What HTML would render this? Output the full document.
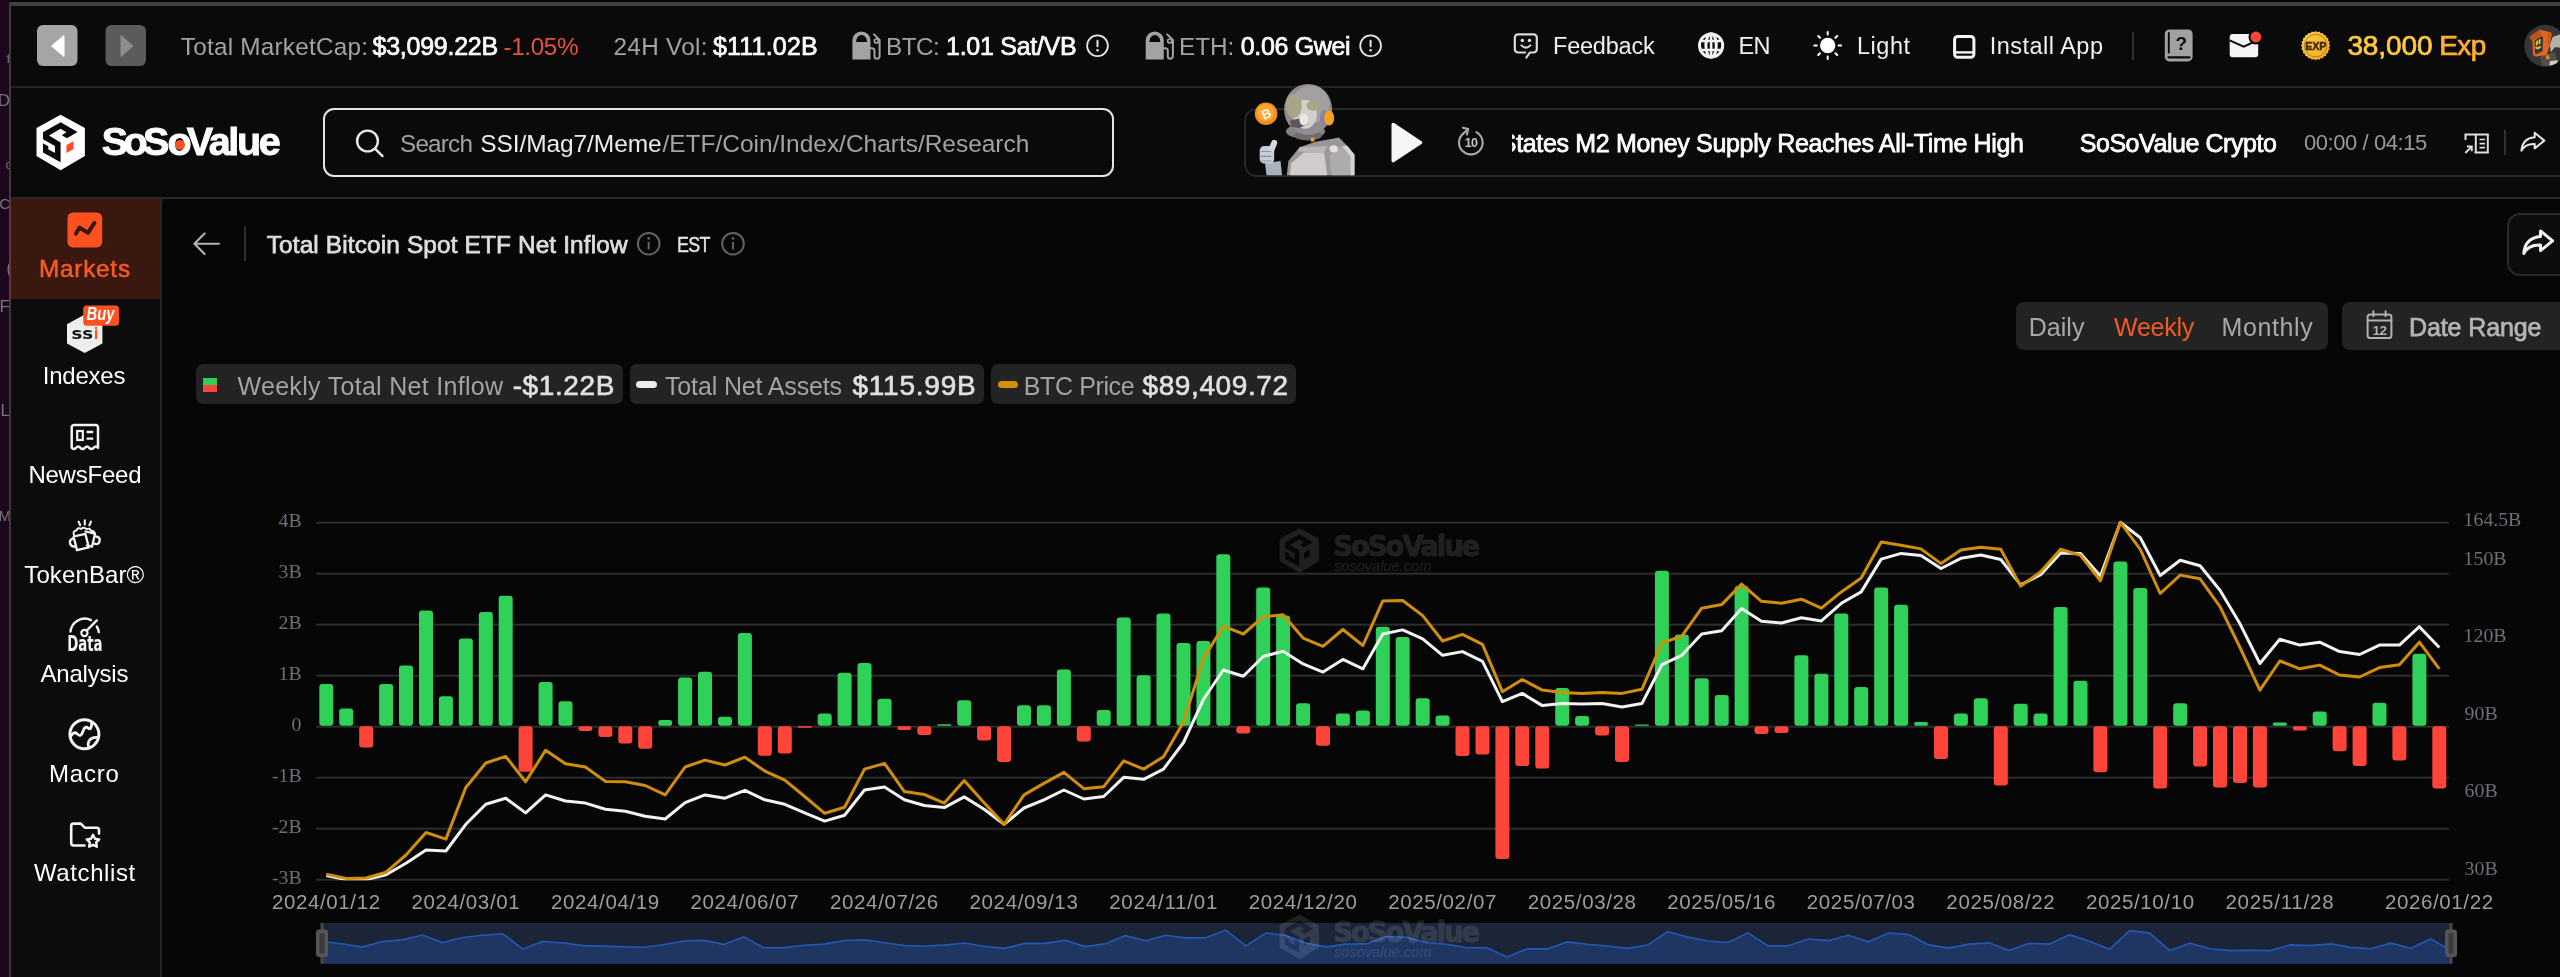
<!DOCTYPE html>
<html lang="en"><head><meta charset="utf-8"><title>Total Bitcoin Spot ETF Net Inflow - SoSoValue</title>
<style>
html,body{margin:0;padding:0;}
body{width:2560px;height:977px;overflow:hidden;background:#0a0a0a;position:relative;font-family:"Liberation Sans",sans-serif;}
.a{position:absolute;}
.t{position:absolute;white-space:pre;line-height:1;}
svg{position:absolute;overflow:visible;}
</style></head><body>
<!-- backgrounds -->
<div class="a" style="left:0;top:0;width:2560px;height:2px;background:#050505"></div>
<div class="a" style="left:10px;top:2px;width:2550px;height:4px;background:#3f4140"></div>
<div class="a" style="left:0;top:0;width:9px;height:977px;background:#1c071f"></div>
<div class="a" style="left:9px;top:2px;width:2px;height:975px;background:#3a3a3a"></div>
<!-- top bar border -->
<div class="a" style="left:11px;top:86px;width:2549px;height:2px;background:#242424"></div>
<!-- header bottom border -->
<div class="a" style="left:11px;top:197.4px;width:2549px;height:2px;background:#272727"></div>
<!-- sidebar -->
<div class="a" style="left:11px;top:199px;width:150px;height:778px;background:#0c0c0c"></div>
<div class="a" style="left:11px;top:199px;width:150px;height:100px;background:#3a1810"></div>
<div class="a" style="left:9px;top:199px;width:2px;height:100px;background:#5c3a33"></div>
<div class="a" style="left:160px;top:199px;width:2px;height:778px;background:#262626"></div>
<!-- content -->
<div class="a" style="left:162px;top:199px;width:2398px;height:778px;background:#060606;border-top-left-radius:10px"></div>
<!-- search box -->
<div class="a" style="left:323px;top:107.5px;width:787px;height:65px;border:2px solid #e4e4e4;border-radius:11px"></div>
<!-- player panel -->
<div class="a" style="left:1244px;top:108.1px;width:1340px;height:65.1px;border:2px solid #272727;border-radius:13px"></div>
<!-- share box -->
<div class="a" style="left:2507px;top:213px;width:80px;height:59px;border:2px solid #2a2a2a;border-radius:13px;background:#0d0d0d"></div>
<!-- period group -->
<div class="a" style="left:2016px;top:302px;width:312px;height:48px;border-radius:8px;background:#232323"></div>
<div class="a" style="left:2341.5px;top:302px;width:240px;height:48px;border-radius:8px;background:#232323"></div>
<!-- legend chips -->
<div class="a" style="left:196.2px;top:363.7px;width:427.3px;height:40.8px;border-radius:7px;background:#232323"></div>
<div class="a" style="left:629.5px;top:363.7px;width:354.7px;height:40.8px;border-radius:7px;background:#232323"></div>
<div class="a" style="left:990.5px;top:363.7px;width:305px;height:40.8px;border-radius:7px;background:#232323"></div>
<div class="a" style="left:203px;top:377.5px;width:14px;height:7.2px;background:#2fd15a"></div>
<div class="a" style="left:203px;top:384.7px;width:14px;height:7px;background:#ff453a"></div>
<div class="a" style="left:636.2px;top:380.7px;width:20.5px;height:7.5px;border-radius:4px;background:#ebebeb"></div>
<div class="a" style="left:997.5px;top:380.7px;width:20.5px;height:7.5px;border-radius:4px;background:#d18e0b"></div>
<!-- title separators -->
<div class="a" style="left:244px;top:226px;width:2px;height:35px;background:#2e2e2e"></div>
<div class="a" style="left:2132px;top:32px;width:2px;height:28px;background:#303030"></div>
<div class="a" style="left:2504px;top:130px;width:2px;height:25px;background:#303030"></div>
<!-- left strip fragments -->
<div class="a" style="left:0;top:0;width:9px;height:977px;overflow:hidden;color:#767676;font:400 17px/1 'Liberation Sans',sans-serif;will-change:transform">
<span class="a" style="right:-1px;top:92px">D</span>
<span class="a" style="right:-1px;top:195.5px;font-size:15px">AC</span>
<span class="a" style="right:-1px;top:298px">F</span>
<span class="a" style="right:-1px;top:402px">L</span>
<span class="a" style="right:-2px;top:508px;font-size:15px">M</span>
<span class="a" style="right:-1px;top:52px;font-size:13px">f</span>
<span class="a" style="right:-3px;top:158px;font-size:13px">c</span>
<span class="a" style="right:-4px;top:258px;font-size:20px">(</span>
</div>
<svg width="2560" height="977" viewBox="0 0 2560 977" style="left:0;top:0;will-change:transform">
<rect x="37" y="25" width="40.5" height="41" rx="6" fill="#a5a5a5"/>
<path d="M51.5 46 L64 35.5 V56.5 Z" fill="#fff" stroke="#fff" stroke-width="1" stroke-linejoin="round"/>
<rect x="105.5" y="25" width="40.5" height="41" rx="6" fill="#5b5b5b"/>
<path d="M133 46 L121 35.5 V56.5 Z" fill="#8d8d8d" stroke="#8d8d8d" stroke-width="1" stroke-linejoin="round"/>
<polygon points="60.61,114.66 84.89,127.96 84.89,155.91 60.61,170.21 36.52,155.91 36.52,127.96" fill="#ffffff"/>
<polygon points="60.61,122.31 77.57,131.96 66.93,138.28 61.80,135.28 66.46,132.29 60.61,128.76 48.96,135.62 60.61,142.40 60.61,162.23 42.97,152.58 42.97,143.27 48.30,146.26 48.30,149.25 54.95,152.91 54.95,145.93 42.97,139.27 42.97,132.29" fill="#0a0a0a"/>
<polygon points="66.46,144.93 73.58,141.27 73.58,148.92 66.46,153.11" fill="#ff4f1f"/>
<g transform="translate(0,0)" fill="#a3a3a3"><path d="M852.4 59.5V40.6a9.05 9.2 0 0 1 18.1 0V59.5Z"/><path d="M856 41.9a5.55 7 0 0 1 11.1 0Z" fill="#0a0a0a"/><path d="M870.3 48.2h1.6q2.6 0 2.6 2.6v5.4a2.55 2.55 0 0 0 5.1 0V40l-5.6-5.6" fill="none" stroke="#a3a3a3" stroke-width="2" stroke-linecap="round" stroke-linejoin="round"/><circle cx="876.4" cy="41" r="2" fill="none" stroke="#a3a3a3" stroke-width="1.7"/></g>
<g transform="translate(293.3,0)" fill="#a3a3a3"><path d="M852.4 59.5V40.6a9.05 9.2 0 0 1 18.1 0V59.5Z"/><path d="M856 41.9a5.55 7 0 0 1 11.1 0Z" fill="#0a0a0a"/><path d="M870.3 48.2h1.6q2.6 0 2.6 2.6v5.4a2.55 2.55 0 0 0 5.1 0V40l-5.6-5.6" fill="none" stroke="#a3a3a3" stroke-width="2" stroke-linecap="round" stroke-linejoin="round"/><circle cx="876.4" cy="41" r="2" fill="none" stroke="#a3a3a3" stroke-width="1.7"/></g>
<circle cx="1097.5" cy="45.7" r="10.4" fill="none" stroke="#e6e6e6" stroke-width="1.8"/><rect x="1096.5" y="39.7" width="2" height="7.5" rx="1" fill="#e6e6e6"/><circle cx="1097.5" cy="50.300000000000004" r="1.25" fill="#e6e6e6"/>
<circle cx="1370.6" cy="45.7" r="10.4" fill="none" stroke="#e6e6e6" stroke-width="1.8"/><rect x="1369.6" y="39.7" width="2" height="7.5" rx="1" fill="#e6e6e6"/><circle cx="1370.6" cy="50.300000000000004" r="1.25" fill="#e6e6e6"/>
<path d="M1525.2 52.5H1518a3.2 3.2 0 0 1-3.2-3.2V37.6a3.2 3.2 0 0 1 3.2-3.2h15.6a3.2 3.2 0 0 1 3.2 3.2v11.7a3.2 3.2 0 0 1-3.2 3.2h-3.8l-3.4 5" fill="none" stroke="#dadada" stroke-width="2.2" stroke-linecap="round" stroke-linejoin="round"/>
<circle cx="1522.3" cy="40.4" r="1.7" fill="#e6e6e6"/><circle cx="1529.5" cy="40.4" r="1.7" fill="#e6e6e6"/>
<path d="M1521.4 45.4q4.5 4.4 9 0" fill="none" stroke="#dadada" stroke-width="2" stroke-linecap="round"/>
<g fill="none" stroke="#f2f2f2" stroke-width="3"><circle cx="1711.1" cy="45.5" r="11.6"/><ellipse cx="1711.1" cy="45.5" rx="5.2" ry="11.8"/><path d="M1711.1 33.7v23.6M1700 41h22.2M1700 50h22.2" stroke-width="2.6"/></g>
<circle cx="1827.7" cy="45.5" r="7.7" fill="#fff"/>
<path d="M1838.60 45.50L1841.10 45.50M1835.41 53.21L1837.18 54.98M1827.70 56.40L1827.70 58.90M1819.99 53.21L1818.22 54.98M1816.80 45.50L1814.30 45.50M1819.99 37.79L1818.22 36.02M1827.70 34.60L1827.70 32.10M1835.41 37.79L1837.18 36.02" stroke="#fff" stroke-width="2" stroke-linecap="round" fill="none"/>
<rect x="1954.6" y="36.5" width="19.3" height="20.7" rx="3" fill="none" stroke="#f4f4f4" stroke-width="3"/>
<path d="M1955 52.4h18.5" stroke="#f4f4f4" stroke-width="2.4"/>
<rect x="2164.8" y="29.4" width="27.8" height="32" rx="4.5" fill="#a1a1a1"/>
<path d="M2168.8 33v19.5" stroke="#0a0a0a" stroke-width="1.9" stroke-linecap="round"/><path d="M2168.5 57.3h21" stroke="#0a0a0a" stroke-width="2.3" stroke-linecap="round"/>
<text x="2181.3" y="50" text-anchor="middle" font-family="Liberation Sans, sans-serif" font-weight="700" font-size="19" fill="#0a0a0a">?</text>
<rect x="2229.7" y="33.9" width="28.5" height="23.4" rx="3" fill="#f5f5f5"/>
<path d="M2229.7 40.3l14 6.3l14.5-6.6" fill="none" stroke="#0a0a0a" stroke-width="2"/>
<circle cx="2255.9" cy="37" r="7.4" fill="#0a0a0a"/><circle cx="2255.9" cy="37" r="5.4" fill="#ff453a"/>
<defs><linearGradient id="gold" x1="0" y1="0" x2="1" y2="1"><stop offset="0" stop-color="#ffd24a"/><stop offset="1" stop-color="#f0a51e"/></linearGradient></defs>
<polygon points="2330.20,45.60 2328.98,47.36 2329.70,49.38 2328.07,50.77 2328.24,52.90 2326.31,53.82 2325.92,55.92 2323.82,56.31 2322.90,58.24 2320.77,58.07 2319.38,59.70 2317.36,58.98 2315.60,60.20 2313.84,58.98 2311.82,59.70 2310.43,58.07 2308.30,58.24 2307.38,56.31 2305.28,55.92 2304.89,53.82 2302.96,52.90 2303.13,50.77 2301.50,49.38 2302.22,47.36 2301.00,45.60 2302.22,43.84 2301.50,41.82 2303.13,40.43 2302.96,38.30 2304.89,37.38 2305.28,35.28 2307.38,34.89 2308.30,32.96 2310.43,33.13 2311.82,31.50 2313.84,32.22 2315.60,31.00 2317.36,32.22 2319.38,31.50 2320.77,33.13 2322.90,32.96 2323.82,34.89 2325.92,35.28 2326.31,37.38 2328.24,38.30 2328.07,40.43 2329.70,41.82 2328.98,43.84" fill="url(#gold)"/>
<circle cx="2315.6" cy="45.6" r="11.3" fill="none" stroke="#8a5e06" stroke-width="0.8" opacity="0.8"/>
<text x="2315.7" y="49.8" text-anchor="middle" font-family="Liberation Sans, sans-serif" font-weight="700" font-size="10.6" fill="#3c2800" stroke="#3c2800" stroke-width="0.4" letter-spacing="-0.1">EXP</text>
<defs><clipPath id="avc"><circle cx="2545.2" cy="45.7" r="20.9"/></clipPath></defs>
<circle cx="2545.2" cy="45.7" r="20.9" fill="#363636"/>
<g clip-path="url(#avc)">
<polygon points="2541.3,54.9 2555.2,52.3 2557.2,61.6 2550.6,66.6 2543.2,66.6 2539.9,58.2" fill="#5a4a44"/>
<polygon points="2549.9,60.9 2557.9,60.2 2557.2,64.2 2549.2,65.6" fill="#cfcbc4"/>
<polygon points="2545.9,55.6 2549.2,55.3 2549.6,58.9 2546.2,59.2" fill="#c8901e"/>
<polygon points="2552.6,37.0 2563.9,33.0 2563.9,48.3 2555.2,46.9 2550.6,52.3 2549.9,44.9" fill="#b6b1a9"/>
<polygon points="2529.3,37.0 2539.9,29.6 2550.6,32.3 2551.6,34.3 2549.9,44.9 2546.6,54.9 2535.9,56.6 2532.9,54.9 2532.6,41.6" fill="#e2641f"/>
<polygon points="2529.3,37.0 2539.9,29.6 2541.3,35.0 2533.3,40.9 2532.9,54.9 2532.6,41.6" fill="#bd521b"/>
<polygon points="2547.6,32.6 2550.6,32.3 2551.6,34.3 2549.9,44.9 2546.9,42.9" fill="#c95a1c"/>
<polygon points="2534.9,40.3 2541.6,36.3 2542.9,37.3 2542.6,50.9 2536.3,54.3 2534.9,52.9" fill="#2e3446"/>
<path d="M2537.3 41.3L2536.7 44.6M2539.8 40.0L2539.4 43.3" stroke="#d6c61e" stroke-width="1.9" stroke-linecap="round" fill="none"/>
<path d="M2536.3 47.6Q2537.9 49.3 2539.9 46.9" stroke="#d6c61e" stroke-width="2.2" stroke-linecap="round" fill="none"/>
</g>
<circle cx="367.5" cy="141" r="10.4" fill="none" stroke="#e8e8e8" stroke-width="2.4"/><path d="M375.2 148.8l7.3 7.3" stroke="#e8e8e8" stroke-width="2.4" stroke-linecap="round"/>
<defs><clipPath id="plc"><rect x="1240" y="70" width="140" height="105.6"/></clipPath></defs><g clip-path="url(#plc)">
<polygon points="1286.8,175.4 1288.4,161.0 1299.6,147.2 1314.5,141.9 1339.0,137.6 1347.5,146.1 1354.5,154.7 1354.5,175.4" fill="#9a969a" />
<polygon points="1290.0,175.4 1291.1,163.2 1303.9,152.5 1324.1,152.5 1327.3,175.4" fill="#cfcccb" />
<polygon points="1299.6,147.2 1327.3,146.1 1324.1,152.5 1297.5,151.5" fill="#b9b5b8" />
<polygon points="1329.4,154.7 1342.2,146.1 1352.9,156.8 1352.9,175.4 1331.6,175.4" fill="#aeabac" />
<polygon points="1342.2,146.1 1347.5,146.1 1354.5,154.7 1354.5,175.4 1350.7,175.4 1350.7,156.8" fill="#d6d4d2" />
<ellipse cx="1333.7" cy="148.8" rx="4.2" ry="3.6" fill="#e4e0dc"/>
<ellipse cx="1305.5" cy="131.2" rx="19.5" ry="7.5" fill="#858185"/>
<ellipse cx="1308.1" cy="135.5" rx="14" ry="5" fill="#6f6b70"/>
<rect x="1310.8" y="137.6" width="3.6" height="4" fill="#f0a020"/>
<ellipse cx="1308.1" cy="109.4" rx="24" ry="25.5" fill="#8f8b90"/>
<ellipse cx="1310.3" cy="104.6" rx="19" ry="19" fill="#a39fa2"/>
<ellipse cx="1304.9" cy="114.2" rx="12" ry="14.5" fill="#d3cecb"/>
<ellipse cx="1293.8" cy="105.7" rx="8" ry="12" fill="#a6a686"/>
<ellipse cx="1313.5" cy="105.7" rx="7" ry="5" fill="#a6a686"/>
<polygon points="1290.0,120.6 1299.6,118.5 1308.1,123.8 1299.6,128.0 1291.1,127.0" fill="#5a5658" />
<ellipse cx="1303.9" cy="119.5" rx="4.5" ry="6" fill="#ebe6e2"/>
<ellipse cx="1325.2" cy="118.2" rx="5.2" ry="8" fill="#8a80a0"/>
<ellipse cx="1329.2" cy="118.0" rx="5" ry="7.4" fill="#f7a21e"/>
<polygon points="1265.0,163.2 1280.5,161.0 1282.1,175.4 1266.6,175.4" fill="#aab3bd" />
<rect x="1259.7" y="146.1" width="14.5" height="17.5" rx="4.5" fill="#c6ced6"/>
<rect x="1269.8" y="139.2" width="6" height="13" rx="3" fill="#d2d9e0" transform="rotate(22 1271.9 146.1)"/>
<path d="M1260.8 151.5h10.5M1260.4 156.3h11M1261.0 161.0h10.5" stroke="#8b949e" stroke-width="1.2" fill="none"/>
<circle cx="1266.1" cy="113.7" r="11.3" fill="#f3901a"/>
<circle cx="1265.6" cy="112.6" r="8.6" fill="#f9a63a"/>
<text x="1266.4" y="118.5" text-anchor="middle" font-family="Liberation Sans, sans-serif" font-weight="700" font-size="13" fill="#fff6e0" transform="rotate(-22 1266.1 113.7)">B</text>
</g>
<path d="M1393.2 124.5V160.7L1420.6 142.6Z" fill="#f6f6f6" stroke="#f6f6f6" stroke-width="3.4" stroke-linejoin="round"/>
<path d="M1476.34 132.18A11.8 11.8 0 1 1 1463.54 133.30" fill="none" stroke="#a9a9a9" stroke-width="2.1" stroke-linecap="round"/>
<path d="M1462.94 127.70L1468.14 129.10L1466.94 134.50" fill="none" stroke="#a9a9a9" stroke-width="2.1" stroke-linecap="round" stroke-linejoin="round"/>
<path d="M1463.54 133.30L1468.14 129.10" fill="none" stroke="#a9a9a9" stroke-width="2.1" stroke-linecap="round"/>
<text x="1471.1" y="147.29999999999998" text-anchor="middle" font-family="Liberation Sans, sans-serif" font-weight="700" font-size="12.5" letter-spacing="-0.6" fill="#c4c4c4">10</text>
<g fill="none" stroke="#e0e0e0" stroke-width="2"><path d="M2465.5 140V134.5H2487.8V152.6H2474.5"/><path d="M2475.8 134.5V152.6"/><path d="M2479.5 139.5h5.5M2479.5 143.6h5.5M2479.5 147.7h5.5" stroke-width="1.7"/><path d="M2465.3 153l6.2-6.2M2467 146.5h4.8v4.8" stroke-width="1.9"/></g>
<path transform="translate(2520.5,132) scale(1.0)" d="M14.2 0.8L23.8 8.6L14.2 16.4V11.9C7.6 11.6 3.4 14 0.9 18.6C1.6 11.4 5.6 5.9 14.2 5.2Z" fill="none" stroke="#e6e6e6" stroke-width="2.00" stroke-linejoin="round"/>
<path transform="translate(2522.6,230) scale(1.26)" d="M14.2 0.8L23.8 8.6L14.2 16.4V11.9C7.6 11.6 3.4 14 0.9 18.6C1.6 11.4 5.6 5.9 14.2 5.2Z" fill="none" stroke="#f4f4f4" stroke-width="2.38" stroke-linejoin="round"/>
<rect x="67.5" y="212.4" width="34.7" height="35" rx="5.5" fill="#ff5120"/>
<path d="M75.9 233.8L79.6 227.6L88 232.8L94.4 222.9" fill="none" stroke="#3a1810" stroke-width="4" stroke-linecap="round" stroke-linejoin="round"/>
<polygon points="84.7,314.6 102.4,324.2 102.4,343.4 84.7,353 67,343.4 67,324.2" fill="#ededed"/>
<text x="71.4" y="339" font-family="DejaVu Sans, Liberation Sans, sans-serif" font-weight="700" font-size="15.5" fill="#141414" textLength="21.6" lengthAdjust="spacingAndGlyphs">ss</text>
<text x="94" y="339" font-family="DejaVu Sans, Liberation Sans, sans-serif" font-weight="700" font-size="15.5" fill="#ff5120" textLength="4.2" lengthAdjust="spacingAndGlyphs">i</text>
<rect x="83.2" y="305.5" width="35.8" height="20.3" rx="3.5" fill="#ff5120"/>
<text x="86.6" y="320.4" font-family="Liberation Sans, sans-serif" font-weight="700" font-style="italic" font-size="18" fill="#fff" textLength="28" lengthAdjust="spacingAndGlyphs">Buy</text>
<path d="M71.7 447.8V427.2a2.3 2.3 0 0 1 2.3-2.3h21.7a2.3 2.3 0 0 1 2.3 2.3V447.8q-2.2-2.4-4.4 0t-4.4 0t-4.4 0t-4.4 0t-4.4 0t-4.3 0Z" fill="none" stroke="#f4f4f4" stroke-width="2.5" stroke-linejoin="round"/>
<rect x="77.2" y="431" width="5.6" height="9" fill="none" stroke="#f4f4f4" stroke-width="2.2"/><path d="M86.6 432h6.6M86.6 438.6h6.6" stroke="#f4f4f4" stroke-width="2.3"/>
<g fill="none" stroke="#f4f4f4" stroke-width="2.3" stroke-linejoin="round" stroke-linecap="round"><path d="M73.6 536.5l11.8-2.6l3.4 13.4l-11.8 2.8Z"/><path d="M73.8 538.5q-4.6 0.6-3.8 4.6t5.4 3.4"/><path d="M85.5 531.5l9.5 2.2l-3 13l-5-1.2"/><path d="M96 536.5q4.6 0.6 3.6 4.6t-5.4 2.6"/><path d="M74 535q-1.6-4 2.4-4.6q1.4-3.4 5-1.6q2.6-2.4 5 0.4q3.4-1.6 4.6 1.6q3.6 0 3.4 3.2" stroke-width="2"/><path d="M78.6 521.6l1.6 3.6M84.8 520.4v4.2M91 521.6l-1.6 3.6" stroke-width="2.1"/></g>
<path d="M70.5 631.5a14.3 14.3 0 0 1 20.5-11.4" fill="none" stroke="#f4f4f4" stroke-width="2.4" stroke-linecap="round"/>
<path d="M96.8 626.5a14.3 14.3 0 0 1 2 5.6" fill="none" stroke="#f4f4f4" stroke-width="2.4" stroke-linecap="round"/>
<circle cx="84.4" cy="633" r="3.1" fill="none" stroke="#f4f4f4" stroke-width="2.2"/><path d="M86.6 630.6L96.8 620.4" stroke="#f4f4f4" stroke-width="2.4" stroke-linecap="round"/>
<text x="67.2" y="650.8" font-family="DejaVu Sans Condensed, DejaVu Sans, Liberation Sans, sans-serif" font-weight="700" font-size="21.5" fill="#f4f4f4" textLength="35.4" lengthAdjust="spacingAndGlyphs">Data</text>
<circle cx="84.4" cy="734.3" r="14.5" fill="none" stroke="#f4f4f4" stroke-width="3"/>
<path d="M70.5 736.5q3.6-6 7-2.4t5.4-2.6t5.4-3.4t3.4-5.6" fill="none" stroke="#f4f4f4" stroke-width="2.8" stroke-linecap="round"/>
<path d="M98.6 737.4q-7.6-0.8-9.6 3.6t0.6 7" fill="none" stroke="#f4f4f4" stroke-width="2.8" stroke-linecap="round"/>
<path d="M84.5 845.5H73.6a2.4 2.4 0 0 1-2.4-2.4V826a2.4 2.4 0 0 1 2.4-2.4h7.2l4.2 4.2h11.6a2.4 2.4 0 0 1 2.4 2.4v3.4" fill="none" stroke="#f4f4f4" stroke-width="2.6" stroke-linejoin="round" stroke-linecap="round"/>
<polygon points="93.00,834.80 94.94,838.73 99.28,839.36 96.14,842.42 96.88,846.74 93.00,844.70 89.12,846.74 89.86,842.42 86.72,839.36 91.06,838.73" fill="none" stroke="#f4f4f4" stroke-width="2.4" stroke-linejoin="round"/>
<path d="M219 243.7H195M204.6 233.4L194.4 243.7L204.6 254" fill="none" stroke="#b4b4b4" stroke-width="2.1" stroke-linecap="round" stroke-linejoin="round"/>
<circle cx="648.7" cy="243.7" r="10.8" fill="none" stroke="#636363" stroke-width="2"/><rect x="647.7" y="241.89999999999998" width="2" height="7.6" fill="#636363"/><circle cx="648.7" cy="238.39999999999998" r="1.3" fill="#636363"/>
<circle cx="733" cy="243.7" r="10.8" fill="none" stroke="#636363" stroke-width="2"/><rect x="732" y="241.89999999999998" width="2" height="7.6" fill="#636363"/><circle cx="733" cy="238.39999999999998" r="1.3" fill="#636363"/>
<rect x="2367.6" y="314.4" width="23.8" height="23.6" rx="2.6" fill="none" stroke="#b0b0b0" stroke-width="2"/>
<path d="M2367.6 320.4h23.8M2373.4 311.2v5M2385.6 311.2v5" stroke="#b0b0b0" stroke-width="2" stroke-linecap="round"/>
<text x="2379.6" y="334.8" text-anchor="middle" font-family="Liberation Sans, sans-serif" font-weight="700" font-size="13.6" letter-spacing="-0.5" fill="#b0b0b0">12</text>
</svg>
<svg width="2560" height="977" viewBox="0 0 2560 977" style="left:0;top:0;will-change:transform">
<g opacity="0.105"><path d="M1299.3 528.3L1319.0 539.0L1319.0 561.3L1299.3 572.8L1279.7 561.3L1279.7 539.0ZM1299.3 534.4L1313.1 542.2L1304.4 547.2L1300.2 544.8L1304.0 542.4L1299.3 539.6L1289.8 545.1L1299.3 550.5L1299.3 566.4L1284.9 558.7L1284.9 551.2L1289.3 553.6L1289.3 556.0L1294.7 558.9L1294.7 553.3L1284.9 548.0L1284.9 542.4ZM1304.0 552.5L1309.8 549.6L1309.8 555.7L1304.0 559.1Z" fill="#fff" fill-rule="evenodd"/><text x="1333.2" y="556.0" font-family="DejaVu Sans, Liberation Sans, sans-serif" font-weight="700" font-size="27.6" letter-spacing="-2.1" fill="#fff" stroke="#fff" stroke-width="0.9">SoSoValue</text><text x="1334" y="570.5" font-family="Liberation Sans, sans-serif" font-style="italic" font-size="14.6" fill="#fff">sosovalue.com</text></g>
<rect x="316.2" y="521.7" width="2132.7" height="2" fill="#2d2d2d"/>
<rect x="316.2" y="572.7" width="2132.7" height="2" fill="#2d2d2d"/>
<rect x="316.2" y="623.7" width="2132.7" height="2" fill="#2d2d2d"/>
<rect x="316.2" y="674.7" width="2132.7" height="2" fill="#2d2d2d"/>
<rect x="316.2" y="725.7" width="2132.7" height="2" fill="#2d2d2d"/>
<rect x="316.2" y="776.7" width="2132.7" height="2" fill="#2d2d2d"/>
<rect x="316.2" y="827.7" width="2132.7" height="2" fill="#2d2d2d"/>
<rect x="316.2" y="878.7" width="2132.7" height="2" fill="#2d2d2d"/>
<rect x="319.3" y="684.1" width="14.0" height="41.6" rx="3.0" fill="#30d158"/>
<rect x="339.2" y="708.6" width="14.0" height="17.1" rx="3.0" fill="#30d158"/>
<rect x="359.2" y="726.3" width="14.0" height="21.2" rx="3.0" fill="#ff453a"/>
<rect x="379.1" y="684.1" width="14.0" height="41.6" rx="3.0" fill="#30d158"/>
<rect x="399.0" y="665.5" width="14.0" height="60.2" rx="3.0" fill="#30d158"/>
<rect x="419.0" y="610.4" width="14.0" height="115.3" rx="3.0" fill="#30d158"/>
<rect x="438.9" y="696.3" width="14.0" height="29.4" rx="3.0" fill="#30d158"/>
<rect x="458.8" y="638.5" width="14.0" height="87.2" rx="3.0" fill="#30d158"/>
<rect x="478.8" y="612.0" width="14.0" height="113.7" rx="3.0" fill="#30d158"/>
<rect x="498.7" y="595.7" width="14.0" height="130.0" rx="3.0" fill="#30d158"/>
<rect x="518.6" y="726.3" width="14.0" height="45.4" rx="3.0" fill="#ff453a"/>
<rect x="538.6" y="682.0" width="14.0" height="43.7" rx="3.0" fill="#30d158"/>
<rect x="558.5" y="701.2" width="14.0" height="24.5" rx="3.0" fill="#30d158"/>
<rect x="578.4" y="726.3" width="14.0" height="4.6" rx="2.3" fill="#ff453a"/>
<rect x="598.4" y="726.3" width="14.0" height="10.7" rx="3.0" fill="#ff453a"/>
<rect x="618.3" y="726.3" width="14.0" height="17.1" rx="3.0" fill="#ff453a"/>
<rect x="638.2" y="726.3" width="14.0" height="22.4" rx="3.0" fill="#ff453a"/>
<rect x="658.2" y="720.1" width="14.0" height="5.6" rx="2.8" fill="#30d158"/>
<rect x="678.1" y="677.6" width="14.0" height="48.1" rx="3.0" fill="#30d158"/>
<rect x="698.0" y="671.8" width="14.0" height="53.9" rx="3.0" fill="#30d158"/>
<rect x="718.0" y="716.7" width="14.0" height="9.0" rx="3.0" fill="#30d158"/>
<rect x="737.9" y="633.1" width="14.0" height="92.6" rx="3.0" fill="#30d158"/>
<rect x="757.8" y="726.3" width="14.0" height="29.4" rx="3.0" fill="#ff453a"/>
<rect x="777.8" y="726.3" width="14.0" height="27.3" rx="3.0" fill="#ff453a"/>
<rect x="797.7" y="726.3" width="14.0" height="1.5" rx="0.8" fill="#ff453a"/>
<rect x="817.7" y="713.5" width="14.0" height="12.2" rx="3.0" fill="#30d158"/>
<rect x="837.6" y="672.7" width="14.0" height="53.0" rx="3.0" fill="#30d158"/>
<rect x="857.5" y="663.0" width="14.0" height="62.7" rx="3.0" fill="#30d158"/>
<rect x="877.5" y="698.7" width="14.0" height="27.0" rx="3.0" fill="#30d158"/>
<rect x="897.4" y="726.3" width="14.0" height="3.6" rx="1.8" fill="#ff453a"/>
<rect x="917.3" y="726.3" width="14.0" height="8.7" rx="3.0" fill="#ff453a"/>
<rect x="937.3" y="724.2" width="14.0" height="1.5" rx="0.8" fill="#30d158"/>
<rect x="957.2" y="700.2" width="14.0" height="25.5" rx="3.0" fill="#30d158"/>
<rect x="977.1" y="726.3" width="14.0" height="14.3" rx="3.0" fill="#ff453a"/>
<rect x="997.1" y="726.3" width="14.0" height="35.7" rx="3.0" fill="#ff453a"/>
<rect x="1017.0" y="705.3" width="14.0" height="20.4" rx="3.0" fill="#30d158"/>
<rect x="1036.9" y="705.3" width="14.0" height="20.4" rx="3.0" fill="#30d158"/>
<rect x="1056.9" y="669.6" width="14.0" height="56.1" rx="3.0" fill="#30d158"/>
<rect x="1076.8" y="726.3" width="14.0" height="15.3" rx="3.0" fill="#ff453a"/>
<rect x="1096.7" y="709.9" width="14.0" height="15.8" rx="3.0" fill="#30d158"/>
<rect x="1116.7" y="617.6" width="14.0" height="108.1" rx="3.0" fill="#30d158"/>
<rect x="1136.6" y="675.2" width="14.0" height="50.5" rx="3.0" fill="#30d158"/>
<rect x="1156.5" y="613.5" width="14.0" height="112.2" rx="3.0" fill="#30d158"/>
<rect x="1176.5" y="643.1" width="14.0" height="82.6" rx="3.0" fill="#30d158"/>
<rect x="1196.4" y="641.0" width="14.0" height="84.7" rx="3.0" fill="#30d158"/>
<rect x="1216.3" y="554.3" width="14.0" height="171.4" rx="3.0" fill="#30d158"/>
<rect x="1236.3" y="726.3" width="14.0" height="7.1" rx="3.0" fill="#ff453a"/>
<rect x="1256.2" y="587.5" width="14.0" height="138.2" rx="3.0" fill="#30d158"/>
<rect x="1276.1" y="615.5" width="14.0" height="110.2" rx="3.0" fill="#30d158"/>
<rect x="1296.1" y="703.3" width="14.0" height="22.4" rx="3.0" fill="#30d158"/>
<rect x="1316.0" y="726.3" width="14.0" height="19.4" rx="3.0" fill="#ff453a"/>
<rect x="1335.9" y="713.5" width="14.0" height="12.2" rx="3.0" fill="#30d158"/>
<rect x="1355.9" y="710.4" width="14.0" height="15.3" rx="3.0" fill="#30d158"/>
<rect x="1375.8" y="626.8" width="14.0" height="98.9" rx="3.0" fill="#30d158"/>
<rect x="1395.7" y="637.0" width="14.0" height="88.7" rx="3.0" fill="#30d158"/>
<rect x="1415.7" y="698.2" width="14.0" height="27.5" rx="3.0" fill="#30d158"/>
<rect x="1435.6" y="715.5" width="14.0" height="10.2" rx="3.0" fill="#30d158"/>
<rect x="1455.5" y="726.3" width="14.0" height="29.6" rx="3.0" fill="#ff453a"/>
<rect x="1475.5" y="726.3" width="14.0" height="28.1" rx="3.0" fill="#ff453a"/>
<rect x="1495.4" y="726.3" width="14.0" height="132.6" rx="3.0" fill="#ff453a"/>
<rect x="1515.3" y="726.3" width="14.0" height="39.8" rx="3.0" fill="#ff453a"/>
<rect x="1535.3" y="726.3" width="14.0" height="42.3" rx="3.0" fill="#ff453a"/>
<rect x="1555.2" y="688.0" width="14.0" height="37.7" rx="3.0" fill="#30d158"/>
<rect x="1575.1" y="716.0" width="14.0" height="9.7" rx="3.0" fill="#30d158"/>
<rect x="1595.1" y="726.3" width="14.0" height="9.2" rx="3.0" fill="#ff453a"/>
<rect x="1615.0" y="726.3" width="14.0" height="35.7" rx="3.0" fill="#ff453a"/>
<rect x="1634.9" y="724.5" width="14.0" height="1.2" rx="0.6" fill="#30d158"/>
<rect x="1654.9" y="570.7" width="14.0" height="155.0" rx="3.0" fill="#30d158"/>
<rect x="1674.8" y="634.4" width="14.0" height="91.3" rx="3.0" fill="#30d158"/>
<rect x="1694.7" y="678.3" width="14.0" height="47.4" rx="3.0" fill="#30d158"/>
<rect x="1714.7" y="695.1" width="14.0" height="30.6" rx="3.0" fill="#30d158"/>
<rect x="1734.6" y="586.0" width="14.0" height="139.7" rx="3.0" fill="#30d158"/>
<rect x="1754.5" y="726.3" width="14.0" height="7.6" rx="3.0" fill="#ff453a"/>
<rect x="1774.5" y="726.3" width="14.0" height="6.6" rx="3.0" fill="#ff453a"/>
<rect x="1794.4" y="655.3" width="14.0" height="70.4" rx="3.0" fill="#30d158"/>
<rect x="1814.4" y="673.7" width="14.0" height="52.0" rx="3.0" fill="#30d158"/>
<rect x="1834.3" y="613.5" width="14.0" height="112.2" rx="3.0" fill="#30d158"/>
<rect x="1854.2" y="686.9" width="14.0" height="38.8" rx="3.0" fill="#30d158"/>
<rect x="1874.2" y="587.5" width="14.0" height="138.2" rx="3.0" fill="#30d158"/>
<rect x="1894.1" y="604.8" width="14.0" height="120.9" rx="3.0" fill="#30d158"/>
<rect x="1914.0" y="722.1" width="14.0" height="3.6" rx="1.8" fill="#30d158"/>
<rect x="1934.0" y="726.3" width="14.0" height="32.6" rx="3.0" fill="#ff453a"/>
<rect x="1953.9" y="713.5" width="14.0" height="12.2" rx="3.0" fill="#30d158"/>
<rect x="1973.8" y="698.2" width="14.0" height="27.5" rx="3.0" fill="#30d158"/>
<rect x="1993.8" y="726.3" width="14.0" height="59.2" rx="3.0" fill="#ff453a"/>
<rect x="2013.7" y="703.8" width="14.0" height="21.9" rx="3.0" fill="#30d158"/>
<rect x="2033.6" y="713.5" width="14.0" height="12.2" rx="3.0" fill="#30d158"/>
<rect x="2053.6" y="606.9" width="14.0" height="118.8" rx="3.0" fill="#30d158"/>
<rect x="2073.5" y="680.8" width="14.0" height="44.9" rx="3.0" fill="#30d158"/>
<rect x="2093.4" y="726.3" width="14.0" height="45.9" rx="3.0" fill="#ff453a"/>
<rect x="2113.4" y="561.5" width="14.0" height="164.2" rx="3.0" fill="#30d158"/>
<rect x="2133.3" y="588.0" width="14.0" height="137.7" rx="3.0" fill="#30d158"/>
<rect x="2153.2" y="726.3" width="14.0" height="62.2" rx="3.0" fill="#ff453a"/>
<rect x="2173.2" y="703.3" width="14.0" height="22.4" rx="3.0" fill="#30d158"/>
<rect x="2193.1" y="726.3" width="14.0" height="40.3" rx="3.0" fill="#ff453a"/>
<rect x="2213.0" y="726.3" width="14.0" height="61.2" rx="3.0" fill="#ff453a"/>
<rect x="2233.0" y="726.3" width="14.0" height="56.6" rx="3.0" fill="#ff453a"/>
<rect x="2252.9" y="726.3" width="14.0" height="61.2" rx="3.0" fill="#ff453a"/>
<rect x="2272.8" y="722.6" width="14.0" height="3.1" rx="1.5" fill="#30d158"/>
<rect x="2292.8" y="726.3" width="14.0" height="4.1" rx="2.0" fill="#ff453a"/>
<rect x="2312.7" y="711.4" width="14.0" height="14.3" rx="3.0" fill="#30d158"/>
<rect x="2332.6" y="726.3" width="14.0" height="25.0" rx="3.0" fill="#ff453a"/>
<rect x="2352.6" y="726.3" width="14.0" height="39.8" rx="3.0" fill="#ff453a"/>
<rect x="2372.5" y="702.8" width="14.0" height="22.9" rx="3.0" fill="#30d158"/>
<rect x="2392.4" y="726.3" width="14.0" height="34.2" rx="3.0" fill="#ff453a"/>
<rect x="2412.4" y="653.8" width="14.0" height="71.9" rx="3.0" fill="#30d158"/>
<rect x="2432.3" y="726.3" width="14.0" height="62.2" rx="3.0" fill="#ff453a"/>
<defs><clipPath id="gclip"><rect x="316" y="515" width="2134" height="365.3"/></clipPath></defs>
<g clip-path="url(#gclip)"><polyline points="326.3,875.5 346.2,879.6 366.2,879.6 386.1,874.7 406.0,863.2 426.0,850.1 445.9,851.0 465.8,824.3 485.8,804.3 505.7,798.2 525.6,812.9 545.6,794.9 565.5,801.0 585.4,803.1 605.4,809.2 625.3,811.2 645.2,816.2 665.2,819.0 685.1,802.7 705.0,794.9 725.0,798.2 744.9,790.4 764.8,799.8 784.8,804.3 804.7,812.9 824.7,821.1 844.6,815.3 864.5,790.0 884.5,787.1 904.4,799.8 924.3,805.5 944.3,807.6 964.2,796.9 984.1,809.2 1004.1,824.3 1024.0,808.0 1043.9,799.8 1063.9,790.0 1083.8,799.0 1103.7,796.5 1123.7,777.3 1143.6,779.3 1163.5,769.1 1183.5,742.5 1203.4,699.5 1223.3,670.0 1243.3,676.2 1263.2,656.5 1283.1,651.2 1303.1,663.9 1323.0,672.1 1342.9,659.4 1362.9,668.8 1382.8,634.0 1402.7,629.9 1422.7,638.9 1442.6,655.3 1462.5,651.6 1482.5,661.4 1502.4,701.6 1522.3,693.4 1542.3,705.6 1562.2,703.6 1582.1,704.0 1602.1,703.6 1622.0,706.9 1641.9,703.6 1661.9,664.7 1681.8,655.3 1701.7,634.0 1721.7,630.7 1741.6,608.6 1761.5,621.3 1781.5,623.0 1801.4,617.7 1821.4,620.9 1841.3,603.3 1861.2,591.9 1881.2,559.1 1901.1,553.4 1921.0,555.4 1941.0,568.5 1960.9,558.3 1980.8,555.0 2000.8,559.5 2020.7,584.9 2040.6,574.7 2060.6,553.0 2080.5,553.4 2100.4,575.9 2120.4,522.3 2140.3,537.8 2160.2,575.5 2180.2,560.3 2200.1,565.7 2220.0,590.2 2240.0,623.8 2259.9,663.5 2279.8,639.3 2299.8,645.1 2319.7,642.2 2339.6,651.6 2359.6,654.5 2379.5,645.1 2399.4,645.1 2419.4,626.7 2439.3,647.5" fill="none" stroke="#f2f2f2" stroke-width="3" stroke-linejoin="round"/>
<polyline points="326.3,874.3 346.2,878.4 366.2,878.0 386.1,872.2 406.0,855.0 426.0,832.5 445.9,839.1 465.8,787.5 485.8,763.0 505.7,756.4 525.6,781.8 545.6,750.3 565.5,763.8 585.4,767.0 605.4,781.4 625.3,781.8 645.2,785.5 665.2,794.9 685.1,767.0 705.0,760.1 725.0,765.0 744.9,757.2 764.8,771.1 784.8,780.1 804.7,796.5 824.7,813.3 844.6,807.2 864.5,769.1 884.5,763.4 904.4,791.6 924.3,794.5 944.3,803.1 964.2,780.6 984.1,802.7 1004.1,824.3 1024.0,794.9 1043.9,783.4 1063.9,772.4 1083.8,788.7 1103.7,786.7 1123.7,760.9 1143.6,769.1 1163.5,756.8 1183.5,722.0 1203.4,658.6 1223.3,626.2 1243.3,634.0 1263.2,616.8 1283.1,614.8 1303.1,638.1 1323.0,646.3 1342.9,629.5 1362.9,645.5 1382.8,600.9 1402.7,600.5 1422.7,615.6 1442.6,641.0 1462.5,634.4 1482.5,644.3 1502.4,691.7 1522.3,679.5 1542.3,690.1 1562.2,692.6 1582.1,693.4 1602.1,692.6 1622.0,693.4 1641.9,689.3 1661.9,643.0 1681.8,636.1 1701.7,608.2 1721.7,604.6 1741.6,584.1 1761.5,601.3 1781.5,603.3 1801.4,599.2 1821.4,608.2 1841.3,591.9 1861.2,577.9 1881.2,541.9 1901.1,545.2 1921.0,548.9 1941.0,563.6 1960.9,550.1 1980.8,547.3 2000.8,549.3 2020.7,586.1 2040.6,571.8 2060.6,549.3 2080.5,555.4 2100.4,580.8 2120.4,522.3 2140.3,549.3 2160.2,593.5 2180.2,575.1 2200.1,578.8 2220.0,606.6 2240.0,647.5 2259.9,690.1 2279.8,661.0 2299.8,668.8 2319.7,665.1 2339.6,675.0 2359.6,677.0 2379.5,667.6 2399.4,664.7 2419.4,642.2 2439.3,668.8" fill="none" stroke="#d18e0b" stroke-width="3" stroke-linejoin="round"/></g>
<rect x="322.0" y="923.0" width="2129.0" height="40.7" fill="#1b2537"/>
<path d="M322.0 963.7L322.0 941.5L342.1 943.7L362.2 947.1L382.3 941.5L402.3 939.9L422.4 935.0L442.5 942.6L462.6 937.5L482.7 935.2L502.8 933.7L522.8 949.2L542.9 941.3L563.0 943.0L583.1 945.6L603.2 946.1L623.3 946.7L643.4 947.2L663.4 944.7L683.5 941.0L703.6 940.4L723.7 944.4L743.8 937.0L763.9 947.8L784.0 947.6L804.0 945.3L824.1 944.1L844.2 940.5L864.3 939.7L884.4 942.8L904.5 945.5L924.5 946.0L944.6 945.1L964.7 943.0L984.8 946.5L1004.9 948.4L1025.0 943.4L1045.1 943.4L1065.1 940.2L1085.2 946.6L1105.3 943.8L1125.4 935.7L1145.5 940.7L1165.6 935.3L1185.7 937.9L1205.7 937.7L1225.8 930.1L1245.9 945.8L1266.0 933.0L1286.1 935.5L1306.2 943.2L1326.2 946.9L1346.3 944.1L1366.4 943.9L1386.5 936.5L1406.6 937.4L1426.7 942.8L1446.8 944.3L1466.8 947.8L1486.9 947.7L1507.0 956.9L1527.1 948.7L1547.2 948.9L1567.3 941.9L1587.3 944.3L1607.4 946.0L1627.5 948.4L1647.6 945.1L1667.7 931.5L1687.8 937.1L1707.9 941.0L1727.9 942.5L1748.0 932.9L1768.1 945.9L1788.2 945.8L1808.3 939.0L1828.4 940.6L1848.5 935.3L1868.5 941.8L1888.6 933.0L1908.7 934.5L1928.8 944.9L1948.9 948.1L1969.0 944.1L1989.0 942.8L2009.1 950.4L2029.2 943.3L2049.3 944.1L2069.4 934.7L2089.5 941.2L2109.6 949.2L2129.6 930.7L2149.7 933.1L2169.8 950.7L2189.9 943.2L2210.0 948.8L2230.1 950.6L2250.2 950.2L2270.2 950.6L2290.3 944.9L2310.4 945.6L2330.5 943.9L2350.6 947.4L2370.7 948.7L2390.7 943.2L2410.8 948.2L2430.9 938.9L2451.0 950.7L2451.0 963.7Z" fill="#1f3663"/>
<polyline points="322.0,941.5 342.1,943.7 362.2,947.1 382.3,941.5 402.3,939.9 422.4,935.0 442.5,942.6 462.6,937.5 482.7,935.2 502.8,933.7 522.8,949.2 542.9,941.3 563.0,943.0 583.1,945.6 603.2,946.1 623.3,946.7 643.4,947.2 663.4,944.7 683.5,941.0 703.6,940.4 723.7,944.4 743.8,937.0 763.9,947.8 784.0,947.6 804.0,945.3 824.1,944.1 844.2,940.5 864.3,939.7 884.4,942.8 904.5,945.5 924.5,946.0 944.6,945.1 964.7,943.0 984.8,946.5 1004.9,948.4 1025.0,943.4 1045.1,943.4 1065.1,940.2 1085.2,946.6 1105.3,943.8 1125.4,935.7 1145.5,940.7 1165.6,935.3 1185.7,937.9 1205.7,937.7 1225.8,930.1 1245.9,945.8 1266.0,933.0 1286.1,935.5 1306.2,943.2 1326.2,946.9 1346.3,944.1 1366.4,943.9 1386.5,936.5 1406.6,937.4 1426.7,942.8 1446.8,944.3 1466.8,947.8 1486.9,947.7 1507.0,956.9 1527.1,948.7 1547.2,948.9 1567.3,941.9 1587.3,944.3 1607.4,946.0 1627.5,948.4 1647.6,945.1 1667.7,931.5 1687.8,937.1 1707.9,941.0 1727.9,942.5 1748.0,932.9 1768.1,945.9 1788.2,945.8 1808.3,939.0 1828.4,940.6 1848.5,935.3 1868.5,941.8 1888.6,933.0 1908.7,934.5 1928.8,944.9 1948.9,948.1 1969.0,944.1 1989.0,942.8 2009.1,950.4 2029.2,943.3 2049.3,944.1 2069.4,934.7 2089.5,941.2 2109.6,949.2 2129.6,930.7 2149.7,933.1 2169.8,950.7 2189.9,943.2 2210.0,948.8 2230.1,950.6 2250.2,950.2 2270.2,950.6 2290.3,944.9 2310.4,945.6 2330.5,943.9 2350.6,947.4 2370.7,948.7 2390.7,943.2 2410.8,948.2 2430.9,938.9 2451.0,950.7" fill="none" stroke="#2458b3" stroke-width="1.6"/>
<g opacity="0.105"><path d="M1299.3 914.6L1319.0 925.3L1319.0 947.6L1299.3 959.1L1279.7 947.6L1279.7 925.3ZM1299.3 920.7L1313.1 928.5L1304.4 933.5L1300.2 931.1L1304.0 928.7L1299.3 925.9L1289.8 931.4L1299.3 936.8L1299.3 952.7L1284.9 945.0L1284.9 937.5L1289.3 939.9L1289.3 942.3L1294.7 945.2L1294.7 939.6L1284.9 934.3L1284.9 928.7ZM1304.0 938.8L1309.8 935.9L1309.8 942.0L1304.0 945.4Z" fill="#fff" fill-rule="evenodd"/><text x="1333.2" y="942.3" font-family="DejaVu Sans, Liberation Sans, sans-serif" font-weight="700" font-size="27.6" letter-spacing="-2.1" fill="#fff" stroke="#fff" stroke-width="0.9">SoSoValue</text><text x="1334" y="956.8" font-family="Liberation Sans, sans-serif" font-style="italic" font-size="14.6" fill="#fff">sosovalue.com</text></g>
<rect x="320.5" y="923.0" width="3" height="40.7" fill="#484848"/>
<rect x="316.0" y="929.5" width="12" height="27.5" rx="3" fill="#555555"/>
<rect x="319.5" y="933" width="5" height="20.5" rx="1" fill="#3a3a3a"/>
<rect x="2449.5" y="923.0" width="3" height="40.7" fill="#484848"/>
<rect x="2445.0" y="929.5" width="12" height="27.5" rx="3" fill="#555555"/>
<rect x="2448.5" y="933" width="5" height="20.5" rx="1" fill="#3a3a3a"/>
</svg>
<!-- texts -->
<div class="a" style="left:0;top:0;width:2560px;height:977px;will-change:transform">
<span class="t" style='left:180.80px;top:34.74px;font:400 24.3px/1 "Liberation Sans", sans-serif;color:#a3a3a3;letter-spacing:0.233px;'>Total MarketCap:</span> <span class="t" style='left:372.50px;top:34.25px;font:400 25px/1 "Liberation Sans", sans-serif;color:#ffffff;letter-spacing:-0.246px;-webkit-text-stroke:0.7px #fff;'>$3,099.22B</span> <span class="t" style='left:503.50px;top:34.74px;font:400 24.3px/1 "Liberation Sans", sans-serif;color:#e8533f;letter-spacing:-0.376px;'>-1.05%</span>
<span class="t" style='left:613.50px;top:34.74px;font:400 24.3px/1 "Liberation Sans", sans-serif;color:#a3a3a3;letter-spacing:0.315px;'>24H Vol:</span> <span class="t" style='left:713.00px;top:34.25px;font:400 25px/1 "Liberation Sans", sans-serif;color:#ffffff;letter-spacing:0.192px;-webkit-text-stroke:0.7px #fff;'>$111.02B</span>
<span class="t" style='left:886.00px;top:34.74px;font:400 24.3px/1 "Liberation Sans", sans-serif;color:#a3a3a3;letter-spacing:-0.531px;'>BTC:</span> <span class="t" style='left:946.00px;top:34.25px;font:400 25px/1 "Liberation Sans", sans-serif;color:#ffffff;letter-spacing:-0.275px;-webkit-text-stroke:0.7px #fff;'>1.01 Sat/VB</span>
<span class="t" style='left:1179.00px;top:34.74px;font:400 24.3px/1 "Liberation Sans", sans-serif;color:#a3a3a3;letter-spacing:-0.031px;'>ETH:</span> <span class="t" style='left:1240.80px;top:34.25px;font:400 25px/1 "Liberation Sans", sans-serif;color:#ffffff;letter-spacing:-0.351px;-webkit-text-stroke:0.7px #fff;'>0.06 Gwei</span>
<span class="t" style='left:1553.00px;top:34.62px;font:400 23.5px/1 "Liberation Sans", sans-serif;color:#f0f0f0;letter-spacing:-0.208px;'>Feedback</span>
<span class="t" style='left:1738.50px;top:34.62px;font:400 23.5px/1 "Liberation Sans", sans-serif;color:#f0f0f0;letter-spacing:-0.674px;'>EN</span>
<span class="t" style='left:1857.00px;top:34.62px;font:400 23.5px/1 "Liberation Sans", sans-serif;color:#f0f0f0;letter-spacing:0.518px;'>Light</span>
<span class="t" style='left:1989.70px;top:34.62px;font:400 23.5px/1 "Liberation Sans", sans-serif;color:#f0f0f0;letter-spacing:0.484px;'>Install App</span>
<span class="t" style='left:2347.40px;top:31.90px;font:400 28px/1 "Liberation Sans", sans-serif;color:#ffcb3e;letter-spacing:-0.114px;-webkit-text-stroke:0.7px #ffcb3e;'>38,000 <span style='font:400 28px/0 "Liberation Sans", sans-serif;color:#ffad30;letter-spacing:-0.638px;margin-left:-0.72px;-webkit-text-stroke:0.7px #ffad30;'>Exp</span></span>
<span class="t" style='left:101.80px;top:122.43px;font:700 39.5px/1 "Liberation Sans", sans-serif;color:#fff;letter-spacing:-4.637px;-webkit-text-stroke:0.9px #fff;'>SoS<span style='font:700 39.5px/0 "Liberation Sans", sans-serif;color:#fff;letter-spacing:1.100px;margin-left:2.69px;-webkit-text-stroke:0.9px #fff;'>o</span><span style='font:700 39.5px/0 "Liberation Sans", sans-serif;color:#fff;letter-spacing:-2.309px;margin-left:-5.83px;-webkit-text-stroke:0.9px #fff;'>Value</span></span>
<span class="t" style='left:400.21px;top:131.98px;font:400 24.5px/1 "Liberation Sans", sans-serif;color:#a3a3a3;letter-spacing:-0.800px;transform:scaleX(0.9903);transform-origin:0 0;'>Search</span> <span class="t" style='left:480.20px;top:131.98px;font:400 24.5px/1 "Liberation Sans", sans-serif;color:#ececec;letter-spacing:-0.086px;'>SSI/Mag7/Meme</span><span class="t" style='left:662.50px;top:131.98px;font:400 24.5px/1 "Liberation Sans", sans-serif;color:#a3a3a3;letter-spacing:-0.027px;'>/ETF/Coin/Index/Charts/Research</span>
<span class="t" style='left:1499.80px;top:131.45px;font:400 25px/1 "Liberation Sans", sans-serif;color:#ffffff;letter-spacing:-0.325px;-webkit-text-stroke:0.75px #fff;'>States M2 Money Supply Reaches All-Time High</span>
<span class="t" style='left:2079.70px;top:131.45px;font:400 25px/1 "Liberation Sans", sans-serif;color:#ffffff;letter-spacing:-0.441px;-webkit-text-stroke:0.75px #fff;'>SoSoValue Crypto</span>
<span class="t" style='left:2304.00px;top:131.80px;font:400 22px/1 "Liberation Sans", sans-serif;color:#9a9a9a;letter-spacing:-0.434px;'>00:00 / 04:15</span>
<span class="t" style='left:38.69px;top:256.90px;font:400 24px/1 "Liberation Sans", sans-serif;color:#fb5a23;letter-spacing:0.800px;transform:scaleX(1.0096);transform-origin:0 0;-webkit-text-stroke:0.5px #fb5a23;'>Markets</span>
<span class="t" style='left:42.80px;top:363.50px;font:400 24px/1 "Liberation Sans", sans-serif;color:#ffffff;letter-spacing:-0.243px;'>Indexes</span>
<span class="t" style='left:28.40px;top:462.90px;font:400 24px/1 "Liberation Sans", sans-serif;color:#ffffff;letter-spacing:-0.224px;'>NewsFeed</span>
<span class="t" style='left:24.30px;top:562.50px;font:400 24px/1 "Liberation Sans", sans-serif;color:#ffffff;letter-spacing:0.114px;'>TokenBar®</span>
<span class="t" style='left:40.40px;top:662.20px;font:400 24px/1 "Liberation Sans", sans-serif;color:#ffffff;letter-spacing:-0.181px;'>Analysis</span>
<span class="t" style='left:49.40px;top:761.50px;font:400 24px/1 "Liberation Sans", sans-serif;color:#ffffff;letter-spacing:0.800px;transform:scaleX(1.0010);transform-origin:0 0;'>Macro</span>
<span class="t" style='left:34.00px;top:861.20px;font:400 24px/1 "Liberation Sans", sans-serif;color:#ffffff;letter-spacing:0.589px;'>Watchlist</span>
<span class="t" style='left:266.70px;top:232.66px;font:400 24.4px/1 "Liberation Sans", sans-serif;color:#dedede;letter-spacing:0.137px;-webkit-text-stroke:0.75px #dedede;'>Total Bitcoin Spot ETF Net Inflow</span>
<span class="t" style='left:676.67px;top:234.72px;font:400 21.5px/1 "Liberation Sans", sans-serif;color:#e2e2e2;letter-spacing:-0.800px;transform:scaleX(0.8316);transform-origin:0 0;-webkit-text-stroke:0.4px #e2e2e2;'>EST</span>
<span class="t" style='left:2028.70px;top:314.95px;font:400 25px/1 "Liberation Sans", sans-serif;color:#a8a8a8;letter-spacing:0.058px;'>Daily</span>
<span class="t" style='left:2114.00px;top:314.95px;font:400 25px/1 "Liberation Sans", sans-serif;color:#f25a24;letter-spacing:-0.261px;'>Weekly</span>
<span class="t" style='left:2221.50px;top:314.95px;font:400 25px/1 "Liberation Sans", sans-serif;color:#a8a8a8;letter-spacing:0.611px;'>Monthly</span>
<span class="t" style='left:2409.00px;top:314.95px;font:400 25px/1 "Liberation Sans", sans-serif;color:#b4b4b4;letter-spacing:-0.102px;-webkit-text-stroke:0.75px #b4b4b4;'>Date Range</span>
<span class="t" style='left:237.50px;top:373.55px;font:400 25px/1 "Liberation Sans", sans-serif;color:#a3a3a3;letter-spacing:0.304px;'>Weekly Total Net Inflow</span> <span class="t" style='left:512.70px;top:371.80px;font:400 28px/1 "Liberation Sans", sans-serif;color:#e0e0e0;letter-spacing:0.601px;-webkit-text-stroke:0.65px #e0e0e0;'>-$1.22B</span>
<span class="t" style='left:665.00px;top:373.55px;font:400 25px/1 "Liberation Sans", sans-serif;color:#a3a3a3;letter-spacing:-0.142px;'>Total Net Assets</span> <span class="t" style='left:852.50px;top:371.80px;font:400 28px/1 "Liberation Sans", sans-serif;color:#e0e0e0;letter-spacing:0.766px;-webkit-text-stroke:0.65px #e0e0e0;'>$115.99B</span>
<span class="t" style='left:1023.70px;top:373.55px;font:400 25px/1 "Liberation Sans", sans-serif;color:#a3a3a3;letter-spacing:-0.375px;'>BTC Price</span> <span class="t" style='left:1142.50px;top:371.80px;font:400 28px/1 "Liberation Sans", sans-serif;color:#e0e0e0;letter-spacing:0.604px;-webkit-text-stroke:0.65px #e0e0e0;'>$89,409.72</span>
<span class="t" style='left:278.61px;top:511.17px;font:400 19.8px/1 "Liberation Serif", serif;color:#6e7079;letter-spacing:0.000px;'>4B</span>
<span class="t" style='left:278.61px;top:562.17px;font:400 19.8px/1 "Liberation Serif", serif;color:#6e7079;letter-spacing:0.000px;'>3B</span>
<span class="t" style='left:278.61px;top:613.17px;font:400 19.8px/1 "Liberation Serif", serif;color:#6e7079;letter-spacing:0.000px;'>2B</span>
<span class="t" style='left:278.61px;top:664.17px;font:400 19.8px/1 "Liberation Serif", serif;color:#6e7079;letter-spacing:0.000px;'>1B</span>
<span class="t" style='left:291.50px;top:715.17px;font:400 19.8px/1 "Liberation Serif", serif;color:#6e7079;letter-spacing:0.000px;'>0</span>
<span class="t" style='left:272.02px;top:766.17px;font:400 19.8px/1 "Liberation Serif", serif;color:#6e7079;letter-spacing:0.000px;'>-1B</span>
<span class="t" style='left:272.02px;top:817.17px;font:400 19.8px/1 "Liberation Serif", serif;color:#6e7079;letter-spacing:0.000px;'>-2B</span>
<span class="t" style='left:272.02px;top:868.17px;font:400 19.8px/1 "Liberation Serif", serif;color:#6e7079;letter-spacing:0.000px;'>-3B</span>
<span class="t" style='left:2463.60px;top:510.47px;font:400 19.8px/1 "Liberation Serif", serif;color:#6e7079;letter-spacing:0.000px;'>164.5B</span>
<span class="t" style='left:2463.60px;top:548.87px;font:400 19.8px/1 "Liberation Serif", serif;color:#6e7079;letter-spacing:0.000px;'>150B</span>
<span class="t" style='left:2463.60px;top:625.87px;font:400 19.8px/1 "Liberation Serif", serif;color:#6e7079;letter-spacing:0.000px;'>120B</span>
<span class="t" style='left:2464.60px;top:703.87px;font:400 19.8px/1 "Liberation Serif", serif;color:#6e7079;letter-spacing:0.000px;'>90B</span>
<span class="t" style='left:2464.60px;top:781.47px;font:400 19.8px/1 "Liberation Serif", serif;color:#6e7079;letter-spacing:0.000px;'>60B</span>
<span class="t" style='left:2464.60px;top:859.27px;font:400 19.8px/1 "Liberation Serif", serif;color:#6e7079;letter-spacing:0.000px;'>30B</span>
<span class="t" style='left:271.90px;top:892.08px;font:400 20.5px/1 "Liberation Sans", sans-serif;color:#9e9e9e;letter-spacing:0.622px;'>2024/01/12</span>
<span class="t" style='left:411.44px;top:892.08px;font:400 20.5px/1 "Liberation Sans", sans-serif;color:#9e9e9e;letter-spacing:0.622px;'>2024/03/01</span>
<span class="t" style='left:550.98px;top:892.08px;font:400 20.5px/1 "Liberation Sans", sans-serif;color:#9e9e9e;letter-spacing:0.622px;'>2024/04/19</span>
<span class="t" style='left:690.51px;top:892.08px;font:400 20.5px/1 "Liberation Sans", sans-serif;color:#9e9e9e;letter-spacing:0.622px;'>2024/06/07</span>
<span class="t" style='left:830.05px;top:892.08px;font:400 20.5px/1 "Liberation Sans", sans-serif;color:#9e9e9e;letter-spacing:0.622px;'>2024/07/26</span>
<span class="t" style='left:969.59px;top:892.08px;font:400 20.5px/1 "Liberation Sans", sans-serif;color:#9e9e9e;letter-spacing:0.622px;'>2024/09/13</span>
<span class="t" style='left:1109.13px;top:892.08px;font:400 20.5px/1 "Liberation Sans", sans-serif;color:#9e9e9e;letter-spacing:0.791px;'>2024/11/01</span>
<span class="t" style='left:1248.67px;top:892.08px;font:400 20.5px/1 "Liberation Sans", sans-serif;color:#9e9e9e;letter-spacing:0.622px;'>2024/12/20</span>
<span class="t" style='left:1388.20px;top:892.08px;font:400 20.5px/1 "Liberation Sans", sans-serif;color:#9e9e9e;letter-spacing:0.622px;'>2025/02/07</span>
<span class="t" style='left:1527.74px;top:892.08px;font:400 20.5px/1 "Liberation Sans", sans-serif;color:#9e9e9e;letter-spacing:0.622px;'>2025/03/28</span>
<span class="t" style='left:1667.28px;top:892.08px;font:400 20.5px/1 "Liberation Sans", sans-serif;color:#9e9e9e;letter-spacing:0.622px;'>2025/05/16</span>
<span class="t" style='left:1806.82px;top:892.08px;font:400 20.5px/1 "Liberation Sans", sans-serif;color:#9e9e9e;letter-spacing:0.622px;'>2025/07/03</span>
<span class="t" style='left:1946.36px;top:892.08px;font:400 20.5px/1 "Liberation Sans", sans-serif;color:#9e9e9e;letter-spacing:0.622px;'>2025/08/22</span>
<span class="t" style='left:2085.89px;top:892.08px;font:400 20.5px/1 "Liberation Sans", sans-serif;color:#9e9e9e;letter-spacing:0.622px;'>2025/10/10</span>
<span class="t" style='left:2225.43px;top:892.08px;font:400 20.5px/1 "Liberation Sans", sans-serif;color:#9e9e9e;letter-spacing:0.791px;'>2025/11/28</span>
<span class="t" style='left:2384.90px;top:892.08px;font:400 20.5px/1 "Liberation Sans", sans-serif;color:#9e9e9e;letter-spacing:0.622px;'>2026/01/22</span>
</div>
<div class="a" style="left:174.6px;top:139.9px;width:10.4px;height:10.4px;border-radius:50%;background:#ff4f1f"></div>
<div class="a" style="left:1490px;top:120px;width:21.9px;height:50px;background:#0a0a0a"></div>
</body></html>
